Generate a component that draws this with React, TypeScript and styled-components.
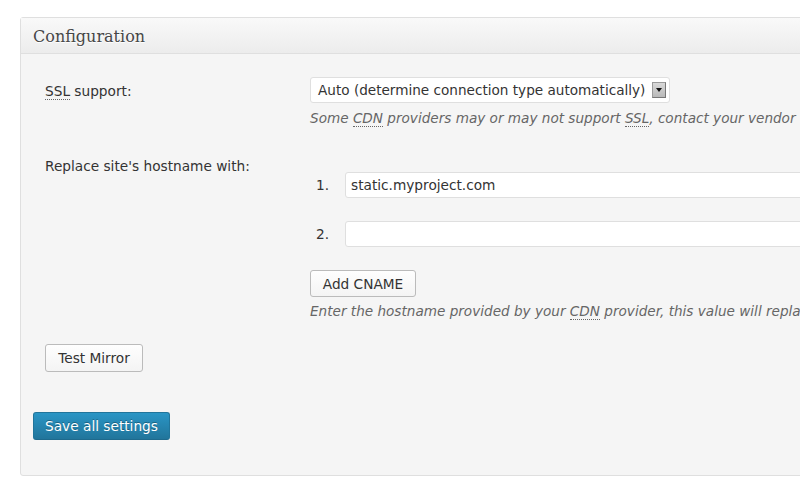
import { createGlobalStyle } from "styled-components";
import styled from "styled-components";

const GlobalStyle = createGlobalStyle`
  html, body {
    margin: 0;
    padding: 0;
    background: #ffffff;
    overflow: hidden;
  }
  body {
    font-family: "DejaVu Sans", sans-serif;
    font-size: 13.7px;
    color: #333;
  }
`;

const Styled_Page = styled.div`
  padding: 17px 0 0 20px;
  width: 1100px;
`;

const Styled_Postbox = styled.div`
  border: 1px solid #dfdfdf;
  border-radius: 3px;
  background-color: #f5f5f5;
  height: 459px;
  box-sizing: border-box;
`;

const Styled_Header = styled.h3`
  margin: 0;
  height: 36px;
  box-sizing: border-box;
  padding: 9px 12px 0;
  border-bottom: 1px solid #dfdfdf;
  background: linear-gradient(to bottom, #f9f9f9, #ececec);
  font-family: "DejaVu Serif", "Liberation Serif", serif;
  font-size: 16px;
  font-weight: normal;
  color: #464646;
  text-shadow: 0 1px 0 #fff;
`;

const Styled_Inside = styled.div`
  padding: 0 12px;
`;

const Styled_FormTable = styled.div`
  display: grid;
  grid-template-columns: 277px 1fr;
  margin-top: 17px;
`;

const Styled_Label = styled.div<{ $top?: number }>`
  padding: ${(p) => p.$top ?? 10}px 12px 0;
  line-height: 20px;
`;

const Styled_Field = styled.div<{ $top?: number }>`
  padding-top: ${(p) => p.$top ?? 6}px;
`;

const Styled_Acronym = styled.abbr`
  text-decoration: none;
  border-bottom: 1px dotted #666;
`;

const Styled_Select = styled.div`
  display: inline-flex;
  align-items: center;
  gap: 7px;
  height: 26px;
  box-sizing: border-box;
  padding: 0 3px 0 7px;
  background: #fff;
  border: 1px solid #dfdfdf;
  border-radius: 3px;
  color: #333;
  font-size: 13.6px;
`;

const Styled_Arrow = styled.span`
  width: 14px;
  height: 16px;
  box-sizing: border-box;
  background: linear-gradient(to bottom, #d8d8d8, #b9b9b9);
  border: 1px solid #9a9a9a;
  border-right-color: #777;
  border-bottom-color: #777;
  display: flex;
  align-items: center;
  justify-content: center;

  &::after {
    content: "";
    border-left: 3px solid transparent;
    border-right: 3px solid transparent;
    border-top: 4px solid #111;
  }
`;

const Styled_Description = styled.p<{ $top?: number }>`
  margin: ${(p) => p.$top ?? 6}px 0 0;
  font-style: italic;
  color: #666;
  font-size: 13.6px;
  white-space: nowrap;
`;

const Styled_List = styled.ol`
  margin: 0;
  padding: 0;
  list-style: none;
  display: grid;
  row-gap: 23px;
`;

const Styled_Item = styled.li`
  display: flex;
  align-items: center;
`;

const Styled_Number = styled.span`
  width: 35px;
  box-sizing: border-box;
  padding-left: 6px;
  color: #333;
`;

const Styled_Input = styled.input`
  width: 600px;
  height: 26px;
  box-sizing: border-box;
  border: 1px solid #dfdfdf;
  border-radius: 3px;
  background: #fff;
  padding: 0 5px;
  font-family: "DejaVu Sans", sans-serif;
  font-size: 13.7px;
  color: #333;
  outline: none;
`;

const Styled_Button = styled.button`
  height: 27px;
  box-sizing: border-box;
  padding: 0 11px;
  border: 1px solid #bbb;
  border-radius: 3px;
  background: linear-gradient(to bottom, #fefefe, #f4f4f4);
  font-family: "DejaVu Sans", sans-serif;
  font-size: 13.7px;
  color: #333;
  cursor: pointer;
`;

const Styled_AddButton = styled(Styled_Button)`
  margin-top: 23px;
  width: 106px;
  padding: 0;
`;

const Styled_TestRow = styled.div`
  padding: 25px 12px 0;
`;

const Styled_TestButton = styled(Styled_Button)`
  width: 98px;
  height: 28px;
  padding: 0;
`;

const Styled_Submit = styled.div`
  margin-top: 40px;
`;

const Styled_PrimaryButton = styled.button`
  height: 28px;
  width: 137px;
  padding: 0;
  box-sizing: border-box;
  border: 1px solid #21759b;
  border-bottom-color: #1e6a8d;
  border-radius: 3px;
  background: linear-gradient(to bottom, #2a95c5, #21759b);
  color: #fff;
  font-family: "DejaVu Sans", sans-serif;
  font-size: 13.7px;
  text-shadow: 0 -1px 0 rgba(0, 0, 0, 0.3);
  cursor: pointer;
`;

export default function App() {
  return (
    <Styled_Page>
      <GlobalStyle />
      <Styled_Postbox>
        <Styled_Header>Configuration</Styled_Header>
        <Styled_Inside>
          <Styled_FormTable>
            <Styled_Label>
              <Styled_Acronym title="Secure Sockets Layer">SSL</Styled_Acronym> support:
            </Styled_Label>
            <Styled_Field>
              <Styled_Select>
                Auto (determine connection type automatically)
                <Styled_Arrow />
              </Styled_Select>
              <Styled_Description $top={7}>
                Some <Styled_Acronym title="Content Delivery Network">CDN</Styled_Acronym> providers may or may not
                support <Styled_Acronym title="Secure Sockets Layer">SSL</Styled_Acronym>, contact your vendor for
                more information.
              </Styled_Description>
            </Styled_Field>

            <Styled_Label $top={30}>Replace site's hostname with:</Styled_Label>
            <Styled_Field $top={46}>
              <Styled_List>
                <Styled_Item>
                  <Styled_Number>1.</Styled_Number>
                  <Styled_Input defaultValue="static.myproject.com" />
                </Styled_Item>
                <Styled_Item>
                  <Styled_Number>2.</Styled_Number>
                  <Styled_Input defaultValue="" />
                </Styled_Item>
              </Styled_List>
              <Styled_AddButton>Add CNAME</Styled_AddButton>
              <Styled_Description>
                Enter the hostname provided by your{" "}
                <Styled_Acronym title="Content Delivery Network">CDN</Styled_Acronym> provider, this value will
                replace your site's hostname in the HTML.
              </Styled_Description>
            </Styled_Field>
          </Styled_FormTable>

          <Styled_TestRow>
            <Styled_TestButton>Test Mirror</Styled_TestButton>
          </Styled_TestRow>

          <Styled_Submit>
            <Styled_PrimaryButton>Save all settings</Styled_PrimaryButton>
          </Styled_Submit>
        </Styled_Inside>
      </Styled_Postbox>
    </Styled_Page>
  );
}
